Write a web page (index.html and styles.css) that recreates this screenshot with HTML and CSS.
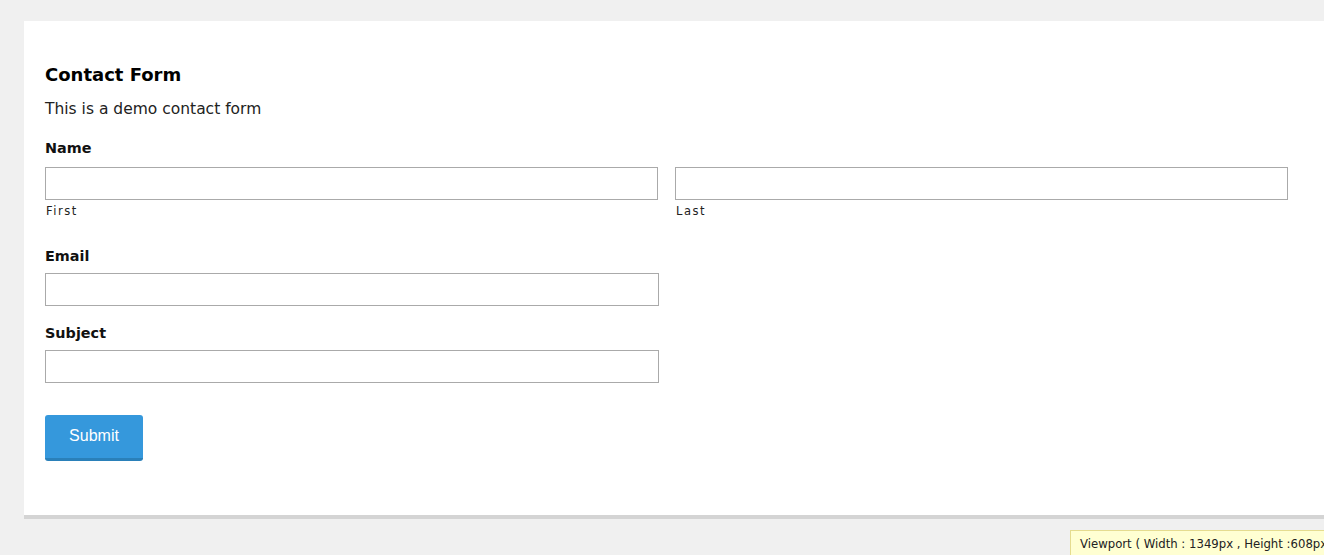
FILE: index.html
```html
<!DOCTYPE html>
<html>
<head>
<meta charset="utf-8">
<link rel="stylesheet" href="styles.css">
</head>
<body>
<div class="card">
  <form class="form">
    <h2 class="title">Contact Form</h2>
    <p class="desc">This is a demo contact form</p>
    <div class="field">
      <label class="label">Name</label>
      <div class="name-row">
        <div class="sub">
          <input class="input" type="text">
          <span class="sublabel">First</span>
        </div>
        <div class="sub">
          <input class="input" type="text">
          <span class="sublabel">Last</span>
        </div>
      </div>
    </div>
    <div class="field email">
      <label class="label">Email</label>
      <input class="input half" type="text">
    </div>
    <div class="field subject">
      <label class="label">Subject</label>
      <input class="input half" type="text">
    </div>
    <button class="submit" type="button">Submit</button>
  </form>
</div>
<div class="viewport">Viewport ( Width : 1349px , Height :608px )</div>
</body>
</html>
```
FILE: styles.css
```css
html, body {
  margin: 0;
  padding: 0;
  background: #f0f0f0;
  overflow: hidden;
  height: 555px;
}
body {
  font-family: "DejaVu Sans", sans-serif;
  color: #111;
}
.card {
  margin: 21px 0 0 24px;
  background: #fff;
  border-bottom: 4px solid #d4d4d4;
  height: 498px;
  box-sizing: border-box;
}
.form {
  padding: 42px 36px 0 21px;
  width: 1243px;
}
.title {
  margin: 0;
  font-size: 18px;
  font-weight: bold;
  line-height: 24px;
  color: #000;
}
.desc {
  margin: 12px 0 0;
  font-size: 15.5px;
  line-height: 20px;
  color: #222;
}
.field {
  margin-top: 19px;
}
.label {
  display: block;
  font-size: 14.4px;
  font-weight: bold;
  line-height: 20px;
  color: #111;
}
.name-row {
  display: flex;
  gap: 17px;
  margin-top: 9px;
}
.sub {
  flex: 0 0 613px;
  display: flex;
  flex-direction: column;
}
.input {
  display: block;
  box-sizing: border-box;
  height: 33px;
  border: 1px solid #aaa;
  border-radius: 0;
  margin: 0;
  padding: 4px 6px;
  background: #fff;
  width: 100%;
}
.input.half {
  width: 614px;
  margin-top: 7px;
}
.sublabel {
  font-size: 11.5px;
  letter-spacing: 1.5px;
  line-height: 14px;
  margin-top: 4px;
  color: #222;
  padding-left: 1px;
}
.field.email {
  margin-top: 28px;
}
.field.subject {
  margin-top: 17px;
}
.submit {
  display: block;
  margin-top: 32px;
  width: 98px;
  height: 46px;
  box-sizing: border-box;
  background: #3598dc;
  border: none;
  border-bottom: 3px solid #2a80b9;
  border-radius: 3px;
  color: #fff;
  font-family: "Liberation Sans", Arial, sans-serif;
  font-size: 16px;
  padding: 0 0 1px;
  cursor: pointer;
}
.viewport {
  position: fixed;
  left: 1070px;
  top: 530px;
  width: 300px;
  height: 30px;
  box-sizing: border-box;
  background: #ffffd2;
  border: 1px solid #e5dc8f;
  font-family: "DejaVu Sans", Tahoma, sans-serif;
  font-size: 11.7px;
  line-height: 26px;
  padding-left: 9px;
  color: #222;
  white-space: nowrap;
}
```
